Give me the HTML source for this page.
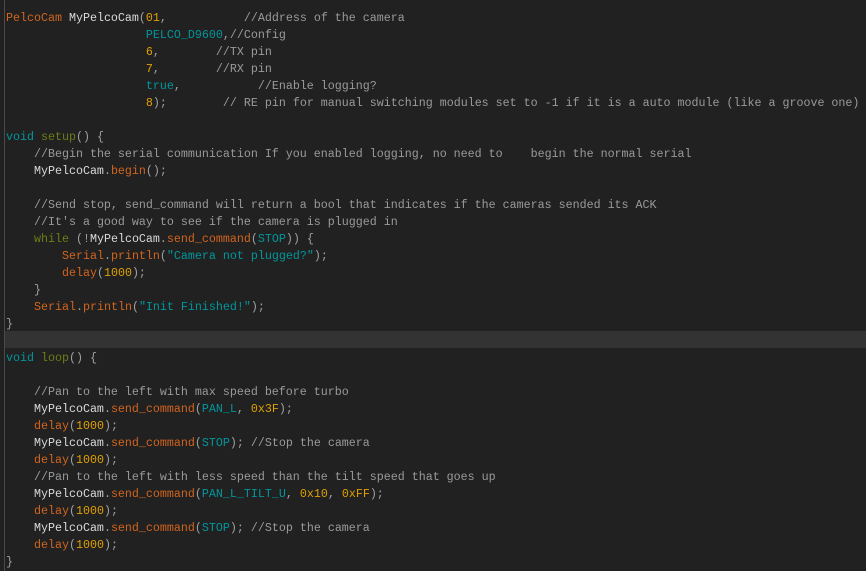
<!DOCTYPE html>
<html><head><meta charset="utf-8"><style>
html,body{margin:0;padding:0;width:866px;height:571px;background:#212121;overflow:hidden}
.wrap{position:relative;width:866px;height:571px}
.lb{position:absolute;left:4px;top:0;width:1px;height:571px;background:#4a4a4a}
.hl{position:absolute;left:5px;top:331px;width:861px;height:17px;background:#333333}
pre{position:absolute;left:6px;top:10px;margin:0;font-family:"Liberation Mono",monospace;font-size:11.67px;line-height:17px;color:#dadada}
.o{color:#d2651e}.t{color:#00979c}.n{color:#e0a000}.c{color:#9a9a9a}.k{color:#6e7c17}.p{color:#a0a0a0}
</style></head><body><div class="wrap"><div class="lb"></div><div class="hl"></div>
<pre><span class="o">PelcoCam</span> MyPelcoCam<span class="p">(</span><span class="n">01</span><span class="p">,</span>           <span class="c">//Address of the camera</span>
                    <span class="t">PELCO_D9600</span><span class="p">,</span><span class="c">//Config</span>
                    <span class="n">6</span><span class="p">,</span>        <span class="c">//TX pin</span>
                    <span class="n">7</span><span class="p">,</span>        <span class="c">//RX pin</span>
                    <span class="t">true</span><span class="p">,</span>           <span class="c">//Enable logging?</span>
                    <span class="n">8</span><span class="p">);</span>        <span class="c">// RE pin for manual switching modules set to -1 if it is a auto module (like a groove one)</span>

<span class="t">void</span> <span class="k">setup</span><span class="p">() {</span>
    <span class="c">//Begin the serial communication If you enabled logging, no need to    begin the normal serial</span>
    MyPelcoCam<span class="p">.</span><span class="o">begin</span><span class="p">();</span>

    <span class="c">//Send stop, send_command will return a bool that indicates if the cameras sended its ACK</span>
    <span class="c">//It's a good way to see if the camera is plugged in</span>
    <span class="k">while</span> <span class="p">(!</span>MyPelcoCam<span class="p">.</span><span class="o">send_command</span><span class="p">(</span><span class="t">STOP</span><span class="p">)) {</span>
        <span class="o">Serial</span><span class="p">.</span><span class="o">println</span><span class="p">(</span><span class="t">"Camera not plugged?"</span><span class="p">);</span>
        <span class="o">delay</span><span class="p">(</span><span class="n">1000</span><span class="p">);</span>
    <span class="p">}</span>
    <span class="o">Serial</span><span class="p">.</span><span class="o">println</span><span class="p">(</span><span class="t">"Init Finished!"</span><span class="p">);</span>
<span class="p">}</span>

<span class="t">void</span> <span class="k">loop</span><span class="p">() {</span>

    <span class="c">//Pan to the left with max speed before turbo</span>
    MyPelcoCam<span class="p">.</span><span class="o">send_command</span><span class="p">(</span><span class="t">PAN_L</span><span class="p">,</span> <span class="n">0x3F</span><span class="p">);</span>
    <span class="o">delay</span><span class="p">(</span><span class="n">1000</span><span class="p">);</span>
    MyPelcoCam<span class="p">.</span><span class="o">send_command</span><span class="p">(</span><span class="t">STOP</span><span class="p">);</span> <span class="c">//Stop the camera</span>
    <span class="o">delay</span><span class="p">(</span><span class="n">1000</span><span class="p">);</span>
    <span class="c">//Pan to the left with less speed than the tilt speed that goes up</span>
    MyPelcoCam<span class="p">.</span><span class="o">send_command</span><span class="p">(</span><span class="t">PAN_L_TILT_U</span><span class="p">,</span> <span class="n">0x10</span><span class="p">,</span> <span class="n">0xFF</span><span class="p">);</span>
    <span class="o">delay</span><span class="p">(</span><span class="n">1000</span><span class="p">);</span>
    MyPelcoCam<span class="p">.</span><span class="o">send_command</span><span class="p">(</span><span class="t">STOP</span><span class="p">);</span> <span class="c">//Stop the camera</span>
    <span class="o">delay</span><span class="p">(</span><span class="n">1000</span><span class="p">);</span>
<span class="p">}</span></pre>
</div></body></html>
